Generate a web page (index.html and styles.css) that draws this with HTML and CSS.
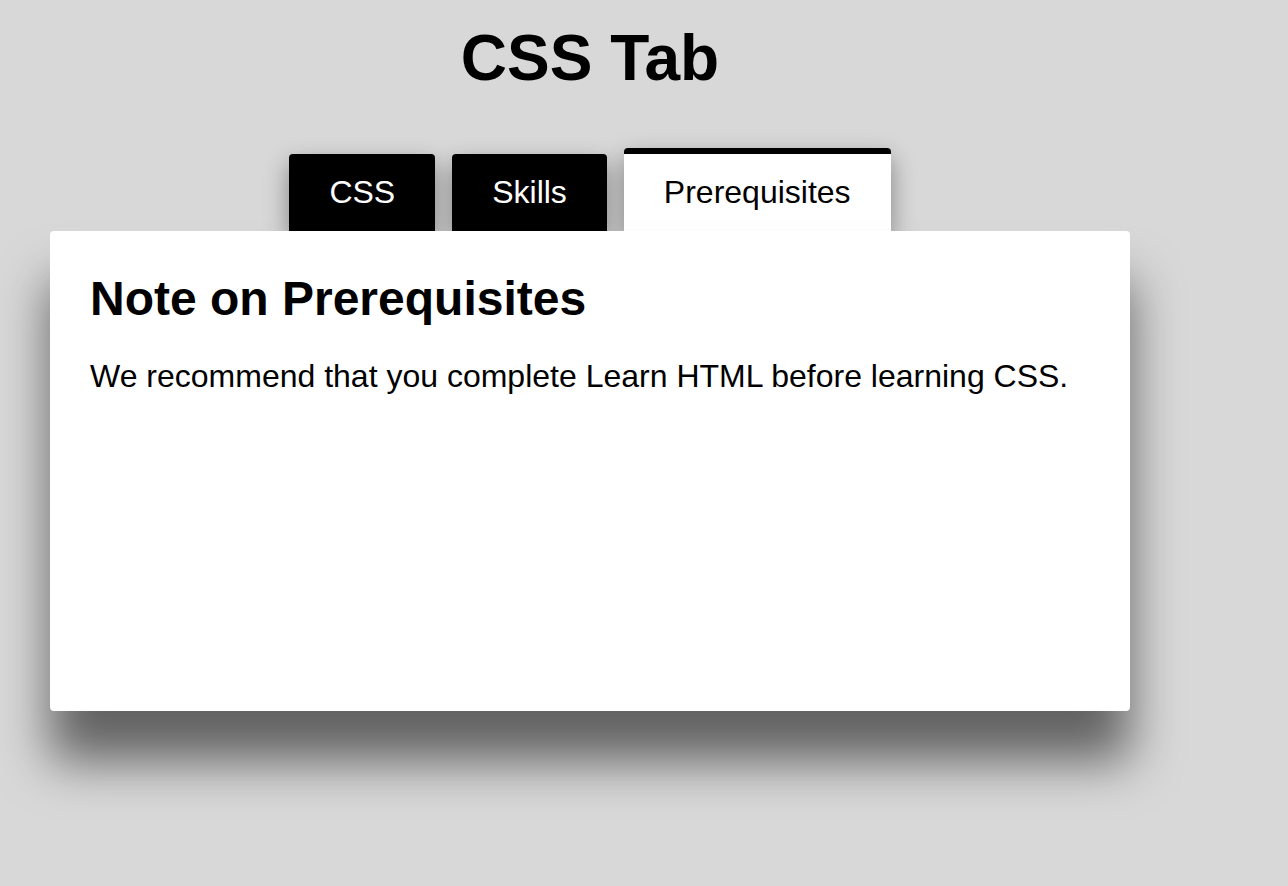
FILE: index.html
```html
<!DOCTYPE html>
<html lang="en">
<head>
<meta charset="utf-8">
<title>CSS Tab</title>
<link rel="stylesheet" href="styles.css">
</head>
<body>
<div class="wrap">
  <h1 class="title">CSS Tab</h1>
  <div class="tabs">
    <div class="tab">CSS</div>
    <div class="tab">Skills</div>
    <div class="tab active">Prerequisites</div>
  </div>
  <div class="panel">
    <h2 class="panel-title">Note on Prerequisites</h2>
    <p class="panel-text">We recommend that you complete Learn HTML before learning CSS.</p>
  </div>
</div>
</body>
</html>
```

FILE: styles.css
```css
html, body {
  margin: 0;
  padding: 0;
}
html {
  background: #d8d8d8;
}
body {
  min-height: 100vh;
  font-family: "Liberation Sans", Arial, sans-serif;
  color: #000;
}
.wrap {
  width: 1080px;
  margin-left: 50px;
  padding-bottom: 120px;
}
.title {
  margin: 21px 0 53px;
  font-size: 64px;
  font-weight: bold;
  text-align: center;
}
.tabs {
  display: flex;
  justify-content: center;
  align-items: flex-end;
  gap: 17px;
}
.tab {
  padding: 20px 40px;
  font-size: 32px;
  line-height: 37px;
  background: #000;
  color: #fff;
  border-radius: 4px 4px 0 0;
  box-shadow: 0 10px 25px rgba(0, 0, 0, 0.4);
}
.tab.active {
  background: #fff;
  color: #000;
  border-top: 6px solid #000;
}
.panel {
  position: relative;
  height: 480px;
  box-sizing: border-box;
  padding: 40px;
  background: #fff;
  border-radius: 4px;
  box-shadow: 0 50px 50px rgba(0, 0, 0, 0.55);
}
.panel-title {
  margin: 0 0 32px;
  font-size: 48px;
  font-weight: bold;
}
.panel-text {
  margin: 0;
  font-size: 32px;
}
```
